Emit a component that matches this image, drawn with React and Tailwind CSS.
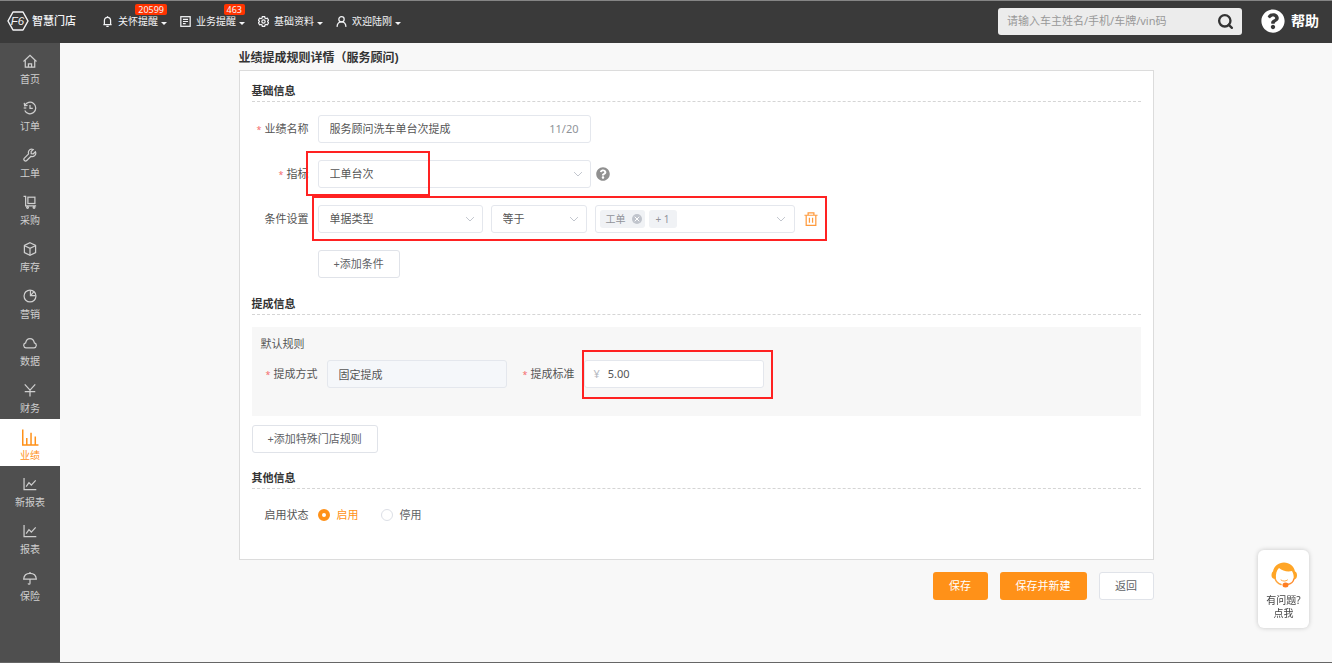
import { useState } from "react";
import { Search, X } from "lucide-react";
import { FaQuestionCircle } from "react-icons/fa";

// Outline icons, all on a 16x16 grid
const ICONS = {
  home: (
    <>
      <path d="M.6 8.600 8 1.500l7.400 7.100" />
      <path d="M2.600 7v8h10.800V7" />
      <path d="M6.200 15v-3.800h3.600V15" />
    </>
  ),
  history: (
    <>
      <path d="M2 5.200A6.600 6.600 0 1 1 2 10.800" />
      <path d="M1.400 2.200 1.900 5.500l3.300-.4" />
      <path d="M8 4.600v3.800h3.200" />
      <path d="M.8 8h3" />
    </>
  ),
  wrench: (
    <path d="M14.200 4.300 11.800 6.600 9.400 6.500 9.300 4.100 11.700 1.700C9.800.900 7.700 1.500 6.700 3.200c-.7 1.200-.7 2.400-.3 3.600L1.600 11.600a1.900 1.900 0 0 0 2.700 2.700l4.900-4.800c1.400.5 3 .2 4.200-.9 1.200-1.200 1.500-2.900.8-4.300z" />
  ),
  cart: (
    <>
      <path d="M.6 1.500h2.400v11h12" />
      <rect x="5.600" y="2.500" width="8" height="7.200" />
      <circle cx="5.200" cy="14.300" r="1" />
      <circle cx="12.600" cy="14.300" r="1" />
    </>
  ),
  box: (
    <>
      <path d="M8 .9 14.400 4v8L8 15.100 1.600 12V4z" />
      <path d="M1.800 4.200 8 7.300l6.200-3.100M8 7.300V15" />
    </>
  ),
  pie: (
    <>
      <circle cx="8" cy="8" r="6.800" />
      <path d="M8.500 1.400V7.500h6M8.500 7.500l3.900-4.200" />
    </>
  ),
  cloud: (
    <path d="M3.400 13.600a2.900 2.900 0 0 1-.4-5.700C3.500 5 5.600 3 8 3s4.500 2 5 4.900a2.900 2.900 0 0 1-.4 5.700z" />
  ),
  yen: <path d="m2 1.500 6 6.700 6-6.700M8 8.200v7.300M2 9.800h12" />,
  bars: <path d="M.7.500v14.500h14.800M4.500 14.500V8.500M8.500 14.500V3.500M12.500 14.500V7" />,
  line: (
    <>
      <path d="M1.200 1v13.500h14" />
      <path d="m3.600 11 3.200-4.500 2.700 2.700L14.500 3.800" />
    </>
  ),
  umbrella: (
    <>
      <path d="M.8 9.200C1.100 5 4.200 2.700 8 2.700s6.900 2.300 7.200 6.500z" />
      <path d="M8 9v5c0 1.500-2 1.500-2.100.1M8 2.700V1.200" />
    </>
  ),
  bell: (
    <>
      <path d="M3.500 12V6.700C3.500 4 5.400 2 8 2s4.500 2 4.500 4.700V12M2 12.500h12" />
      <path d="M6.300 15h3.400M8 2V.500" />
    </>
  ),
  doc: (
    <>
      <rect x="1.200" y="1" width="13.600" height="14" />
      <path d="M4.300 4.800h7.400M4.300 8h7.400M4.300 11.200h4" />
    </>
  ),
  gear: (
    <>
      <path d="M6.300 1h3.400l.5 2 1.500.9 2-.6 1.700 2.900L14 7.600v.9l1.400 1.400-1.700 2.900-2-.6-1.500.9-.5 2H6.300l-.5-2-1.500-.9-2 .6L.6 9.900 2 8.500v-.9L.6 6.200l1.700-2.900 2 .6L5.800 3z" />
      <circle cx="8" cy="8" r="2.400" />
    </>
  ),
  user: (
    <>
      <circle cx="8" cy="4.800" r="3.900" />
      <path d="M1.500 15.800c.3-4.500 2.600-7.200 6.500-7.200s6.200 2.700 6.500 7.200" />
    </>
  ),
  trash: (
    <>
      <path d="M.5 3.700h15M4.700 3.500V1h6.600v2.500" />
      <path d="M2.500 3.800v11.500h11V3.800M6.200 6.500v5.700M9.800 6.500v5.700" />
    </>
  ),
  chevron: <path d="m3.500 5.800 4.500 4.500 4.500-4.500" />,
};

function Icon({ name, className, strokeWidth = 1.4 }) {
  return (
    <svg
      viewBox="0 0 16 16"
      fill="none"
      stroke="currentColor"
      strokeWidth={strokeWidth}
      className={className}
      aria-hidden="true"
    >
      {ICONS[name]}
    </svg>
  );
}

const topMenu = [
  { icon: "bell", label: "关怀提醒", badge: "20599" },
  { icon: "doc", label: "业务提醒", badge: "463" },
  { icon: "gear", label: "基础资料" },
  { icon: "user", label: "欢迎陆刚" },
];

const sideMenu = [
  { icon: "home", label: "首页" },
  { icon: "history", label: "订单" },
  { icon: "wrench", label: "工单" },
  { icon: "cart", label: "采购" },
  { icon: "box", label: "库存" },
  { icon: "pie", label: "营销" },
  { icon: "cloud", label: "数据" },
  { icon: "yen", label: "财务" },
  { icon: "bars", label: "业绩", active: true },
  { icon: "line", label: "新报表" },
  { icon: "line", label: "报表" },
  { icon: "umbrella", label: "保险" },
];

function Logo() {
  return (
    <a href="#" className="flex items-center gap-[3px] text-gray-100">
      <svg viewBox="0 0 44 40" className="h-5 w-[22px]" fill="none" aria-hidden="true">
        <path
          d="M12 2h20l10 18-10 18H12L2 20z"
          stroke="currentColor"
          strokeWidth="3"
          strokeLinejoin="round"
        />
        <text
          x="21"
          y="28"
          textAnchor="middle"
          fontFamily="Liberation Sans, sans-serif"
          fontStyle="italic"
          fontWeight="400"
          fontSize="23"
          fill="currentColor"
        >
          F6
        </text>
      </svg>
      <span className="text-[11px] font-medium">智慧门店</span>
    </a>
  );
}

function Header() {
  return (
    <header className="flex h-[43px] shrink-0 items-center border-t border-[#858585] bg-[#3a3a3a] pr-[13px] pb-[2px] pl-[7px] text-white">
      <Logo />
      <nav className="ml-[26px] flex items-center gap-[13px]">
        {topMenu.map((item) => (
          <button
            key={item.label}
            className="relative flex items-center text-[10px] leading-3 text-gray-100"
          >
            <Icon name={item.icon} className="mr-[5px] size-[11px]" strokeWidth={1.8} />
            {item.label}
            <span className="mt-1 ml-[3px] border-x-3 border-t-3 border-x-transparent border-t-gray-100" />
            {item.badge && (
              <span className="absolute -top-[11px] right-0 rounded-xs bg-[#ff3300] px-[3px] text-[9px] leading-[11px]">
                {item.badge}
              </span>
            )}
          </button>
        ))}
      </nav>
      <form className="ml-auto flex h-[27px] w-[244px] items-center rounded-[3px] bg-[#ececec] pr-2 pl-[9px]">
        <input
          type="text"
          aria-label="搜索"
          placeholder="请输入车主姓名/手机/车牌/vin码"
          className="min-w-0 flex-1 text-[11px] text-gray-700 outline-none placeholder:text-[#999]"
        />
        <button type="button" aria-label="查询">
          <Search className="size-[17px] text-[#333]" strokeWidth={3.3} />
        </button>
      </form>
      <a href="#" className="ml-[19px] flex items-center gap-[6px] text-sm font-bold">
        <FaQuestionCircle className="size-6" />
        帮助
      </a>
    </header>
  );
}

function Sidebar() {
  return (
    <nav className="w-[60px] shrink-0 bg-[#4f4f4f]">
      {sideMenu.map((item) => (
        <a
          key={item.label}
          href="#"
          className={`flex h-[47px] flex-col items-center text-[10px] leading-[14px] ${
            item.active ? "gap-[2px] bg-white pt-[10px] text-[#ff9118]" : "gap-1 pt-[11px] text-[#cfcfcf]"
          }`}
        >
          <Icon name={item.icon} className={item.active ? "size-[17px]" : "size-[14px]"} />
          {item.label}
        </a>
      ))}
    </nav>
  );
}

function SectionTitle({ children }) {
  return (
    <h2 className="border-b border-dashed border-[#d5d5d5] pb-[2px] text-[11px] leading-4 font-bold text-[#333]">
      {children}
    </h2>
  );
}

function Label({ htmlFor, required, children }) {
  return (
    <label htmlFor={htmlFor} className="w-[57px] shrink-0 text-right whitespace-nowrap">
      {required && <span className="mr-[3px] text-[9px] text-[#f56c6c]">*</span>}
      {children}
    </label>
  );
}

function Select({ id, label, value, className }) {
  return (
    <div className={`relative ${className}`}>
      <select
        id={id}
        aria-label={label}
        className="h-7 w-full appearance-none rounded-[3px] border border-[#e4e7ed] bg-white pr-7 pl-[11px]"
      >
        <option>{value}</option>
      </select>
      <Icon
        name="chevron"
        strokeWidth={1.1}
        className="pointer-events-none absolute top-[7px] right-[6px] size-[14px] text-[#c0c4cc]"
      />
    </div>
  );
}

function PlainButton({ children }) {
  return (
    <button className="h-7 min-w-[55px] rounded-[3px] border border-[#e0e3e9] bg-white px-[15px] text-[#606266]">
      {children}
    </button>
  );
}

function PrimaryButton({ children }) {
  return (
    <button className="h-7 min-w-[55px] rounded-[3px] bg-[#ff9118] px-4 text-white">
      {children}
    </button>
  );
}

// Red frame laid over the fields that need attention
function Mark({ className }) {
  return (
    <span className={`pointer-events-none absolute border-2 border-[#ff2222] ${className}`} />
  );
}

function BasicInfo() {
  const [name, setName] = useState("服务顾问洗车单台次提成");

  return (
    <section>
      <SectionTitle>基础信息</SectionTitle>
      <div className="mt-[13px] flex flex-col gap-[17px]">
        <div className="flex items-center gap-[9px]">
          <Label htmlFor="name" required>
            业绩名称
          </Label>
          <div className="flex h-7 w-[273px] items-center rounded-[3px] border border-[#e4e7ed] px-[11px]">
            <input
              id="name"
              type="text"
              maxLength={20}
              value={name}
              onChange={(e) => setName(e.target.value)}
              className="min-w-0 flex-1 outline-none"
            />
            <span className="text-[#909399]">{name.length}/20</span>
          </div>
        </div>

        <div className="flex items-center gap-[9px]">
          <Label htmlFor="target" required>
            指标
          </Label>
          <div className="relative flex items-center gap-[5px]">
            <Select id="target" value="工单台次" className="w-[273px]" />
            <FaQuestionCircle className="size-[14px] text-[#909090]" />
            <Mark className="-top-[9px] -bottom-2 -left-3 w-[124px]" />
          </div>
        </div>

        <div className="flex items-center gap-[9px]">
          <Label htmlFor="field">条件设置</Label>
          <div className="relative flex items-center gap-2">
            <Select id="field" value="单据类型" className="w-[165px]" />
            <Select label="条件" value="等于" className="w-24" />
            <div className="flex h-7 w-[200px] items-center gap-1 rounded-[3px] border border-[#e4e7ed] pr-[6px] pl-1 text-[10px] text-[#909399]">
              <span className="flex h-[18px] items-center gap-[6px] rounded-[3px] bg-[#f0f2f5] pr-[3px] pl-[6px]">
                工单
                <button
                  aria-label="移除工单"
                  className="flex size-[10px] items-center justify-center rounded-full bg-[#c0c4cc] text-white"
                >
                  <X className="size-2" strokeWidth={3} />
                </button>
              </span>
              <span className="flex h-[18px] items-center rounded-[3px] bg-[#f0f2f5] px-[7px]">
                + 1
              </span>
              <button aria-label="展开选项" className="ml-auto text-[#c0c4cc]">
                <Icon name="chevron" strokeWidth={1.1} className="size-[14px]" />
              </button>
            </div>
            <button aria-label="删除条件" className="ml-px text-[#ff9a3c]">
              <Icon name="trash" className="size-[14px]" />
            </button>
            <Mark className="-top-[9px] -right-[9px] -bottom-2 -left-[6px]" />
          </div>
        </div>

        <div className="ml-[66px]">
          <PlainButton>+添加条件</PlainButton>
        </div>
      </div>
    </section>
  );
}

function CommissionInfo() {
  return (
    <section className="mt-[18px]">
      <SectionTitle>提成信息</SectionTitle>
      <div className="mt-3 mb-[9px] bg-[#f7f7f7] px-[9px] pt-2 pb-7">
        <h3 className="mb-2 leading-[17px]">默认规则</h3>
        <div className="flex items-center">
          <Label htmlFor="mode" required>
            提成方式
          </Label>
          <input
            id="mode"
            type="text"
            disabled
            value="固定提成"
            className="ml-[9px] h-7 w-[180px] rounded-[3px] border border-[#e4e7ed] bg-[#f5f7fa] px-[11px]"
          />
          <div className="ml-[11px] flex items-center gap-[9px]">
            <Label htmlFor="standard" required>
              提成标准
            </Label>
            <div className="relative flex h-7 w-[180px] items-center gap-2 rounded-[3px] border border-[#e4e7ed] bg-white px-[9px]">
              <span className="text-[#b4b8c0]">¥</span>
              <input
                id="standard"
                type="text"
                defaultValue="5.00"
                className="min-w-0 flex-1 outline-none"
              />
              <Mark className="-top-[11px] -right-[10px] -bottom-3 -left-[3px]" />
            </div>
          </div>
        </div>
      </div>
      <PlainButton>+添加特殊门店规则</PlainButton>
    </section>
  );
}

function OtherInfo() {
  const [status, setStatus] = useState("启用");

  return (
    <section className="mt-[17px]">
      <SectionTitle>其他信息</SectionTitle>
      <fieldset className="mt-[18px] flex items-center">
        <legend className="float-left mr-[9px] w-[57px] text-right">启用状态</legend>
        {["启用", "停用"].map((option) => (
          <label
            key={option}
            className={`mr-[22px] flex items-center gap-[7px] ${
              status === option ? "text-[#ff9118]" : "text-[#606266]"
            }`}
          >
            <input
              type="radio"
              name="status"
              checked={status === option}
              onChange={() => setStatus(option)}
              className="size-3 appearance-none rounded-full border border-[#dcdfe6] bg-white checked:border-4 checked:border-[#ff9118]"
            />
            {option}
          </label>
        ))}
      </fieldset>
    </section>
  );
}

function HelpWidget() {
  return (
    <button className="fixed right-[23px] bottom-[35px] flex w-[51px] flex-col items-center rounded-md bg-white pt-3 pb-2 text-[10px] leading-[13px] text-[#444] shadow-[0_0_5px_rgba(0,0,0,0.2)]">
      <svg viewBox="0 0 52 52" className="mb-[6px] size-[26px]" fill="none" aria-hidden="true">
        <path
          d="M4 19C6 8 15 1 26 1s20 7 22 18c3 1 4 4 4 8 0 5-3 8-7 8 1-7 0-12-3-17-9 2-19 0-26-6-5 5-7 12-6 22-5 1-9-2-9-7 0-4 1-7 3-8z"
          fill="#ffa526"
        />
        <path d="M8 33c2 6 6 10 12 12" stroke="#ffa53c" strokeWidth="3" strokeLinecap="round" />
        <path d="M46 33c-1 7-6 11-14 12" stroke="#ff8a2a" strokeWidth="3" />
        <path d="M20 36c4 3 9 3 13 0" stroke="#ffa53c" strokeWidth="2" strokeLinecap="round" />
        <ellipse cx="29" cy="46" rx="6" ry="5" fill="#ff7e22" />
      </svg>
      <span>有问题?</span>
      <span>点我</span>
    </button>
  );
}

export default function App() {
  return (
    <div className="flex min-h-screen flex-col bg-[#f8f8f8] font-['Noto_Sans','Noto_Sans_CJK_SC',sans-serif] text-[11px] leading-4 text-[#555]">
      <Header />
      <div className="flex flex-1 border-b border-[#666]">
        <Sidebar />
        <main className="min-w-0 flex-1">
          <div className="mx-auto max-w-[915px] pt-[6px]">
            <h1 className="mb-[3px] text-[12px] leading-[18px] font-bold text-[#333]">
              业绩提成规则详情（服务顾问)
            </h1>
            <div className="border border-[#dcdcdc] bg-white px-3 pt-3 pb-9">
              <BasicInfo />
              <CommissionInfo />
              <OtherInfo />
            </div>
            <div className="mt-3 flex justify-end gap-3">
              <PrimaryButton>保存</PrimaryButton>
              <PrimaryButton>保存并新建</PrimaryButton>
              <PlainButton>返回</PlainButton>
            </div>
          </div>
        </main>
      </div>
      <HelpWidget />
    </div>
  );
}
